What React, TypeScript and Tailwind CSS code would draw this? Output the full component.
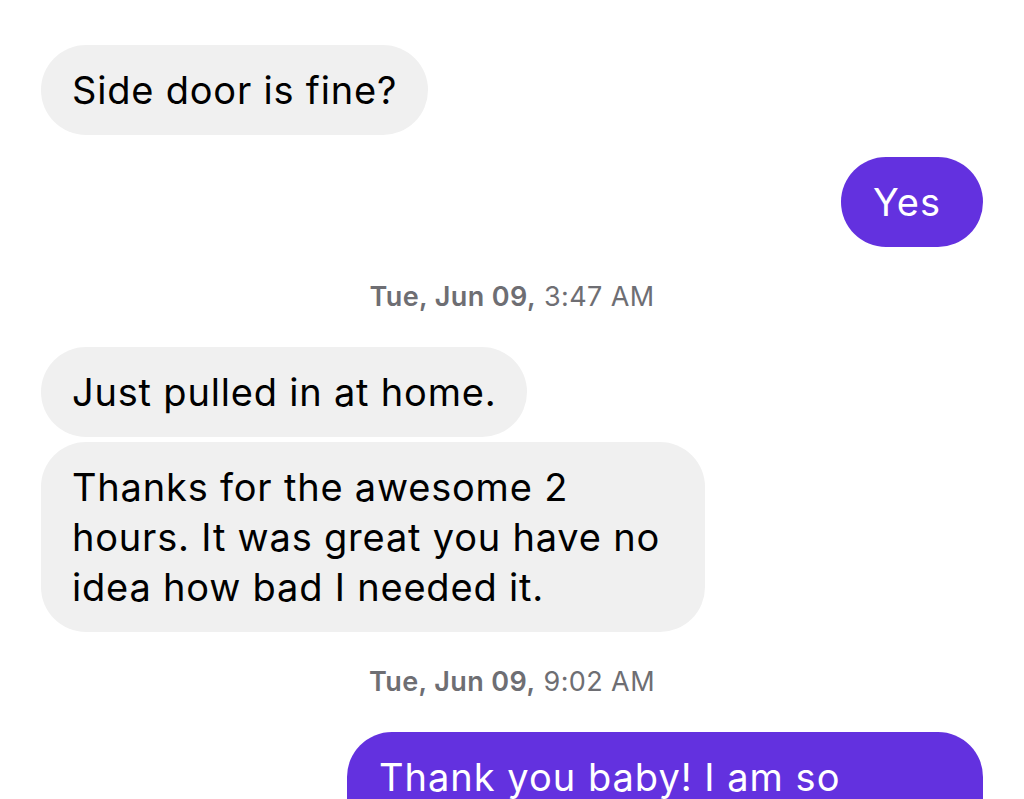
import React from "react";

type Msg =
  | { kind: "in"; text: string }
  | { kind: "out"; text: string }
  | { kind: "time"; day: string; time: string };

const messages: Msg[] = [
  { kind: "in", text: "Side door is fine?" },
  { kind: "out", text: "Yes" },
  { kind: "time", day: "Tue, Jun 09,", time: "3:47 AM" },
  { kind: "in", text: "Just pulled in at home." },
  { kind: "in", text: "Thanks for the awesome 2 hours. It was great you have no idea how bad I needed it." },
  { kind: "time", day: "Tue, Jun 09,", time: "9:02 AM" },
  { kind: "out", text: "Thank you baby! I am so grateful for every minute we got together today." },
];

const Bubble = ({ msg }: { msg: Msg }) => {
  if (msg.kind === "time") {
    return (
      <div className="flex justify-center gap-[8px] py-[35px] text-[27px] leading-[30px] tracking-[0.4px] text-[#6e6e73]">
        <span className="font-semibold">{msg.day}</span>
        <span>{msg.time}</span>
      </div>
    );
  }
  if (msg.kind === "out") {
    return (
      <div className="flex justify-end">
        <div className="max-w-[636px] rounded-[45px] bg-[#6331df] pl-[32px] pr-[42px] py-[20px] text-[38px] leading-[50px] tracking-[1px] text-white">
          {msg.text}
        </div>
      </div>
    );
  }
  return (
    <div className="flex justify-start">
      <div className="max-w-[664px] rounded-[45px] bg-[#f0f0f0] px-[31px] py-[20px] text-[38px] leading-[50px] tracking-[0.8px] text-black">
        {msg.text}
      </div>
    </div>
  );
};

export default function App() {
  return (
    <div
      className="h-[799px] overflow-hidden bg-white px-[41px] pt-[45px]"
      style={{ fontFamily: "Inter, 'Noto Sans', sans-serif" }}
    >
      <div className="flex flex-col">
        <Bubble msg={messages[0]} />
        <div className="h-[22px]" />
        <Bubble msg={messages[1]} />
        <Bubble msg={messages[2]} />
        <Bubble msg={messages[3]} />
        <div className="h-[5px]" />
        <Bubble msg={messages[4]} />
        <Bubble msg={messages[5]} />
        <Bubble msg={messages[6]} />
      </div>
    </div>
  );
}
